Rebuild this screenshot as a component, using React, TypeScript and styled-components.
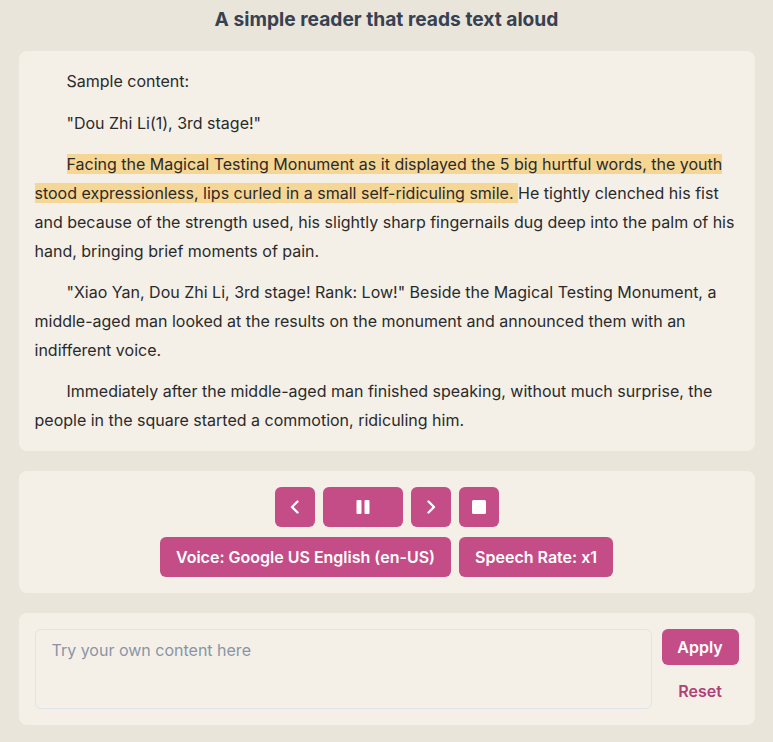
import React from "react";
import styled, { createGlobalStyle } from "styled-components";

const GlobalStyle = createGlobalStyle`
  html, body {
    margin: 0;
    padding: 0;
    background: #e9e5db;
  }
  body {
    font-family: Inter, "Noto Sans", sans-serif;
    color: #2a2a2a;
  }
  * { box-sizing: border-box; }
`;

const Page = styled.main`
  max-width: 736px;
  margin: 0 auto;
  padding: 5px 0 17px;
  display: flex;
  flex-direction: column;
  gap: 20px;
`;

const Title = styled.h1`
  margin: 0 0 -2px;
  font-size: 19.2px;
  line-height: 28px;
  font-weight: 700;
  color: #374151;
  text-align: center;
`;

const Card = styled.section`
  background: #f4f0e8;
  border-radius: 8px;
  padding: 16px;
`;

const Reader = styled(Card)`
  display: flex;
  flex-direction: column;
  gap: 12.8px;
`;

const Para = styled.p`
  margin: 0;
  font-size: 16px;
  line-height: 28.8px;
  text-indent: 32px;
  color: #2a2a2a;
`;

const Highlight = styled.span`
  background: #f6d695;
`;

const Controls = styled(Card)`
  display: flex;
  flex-direction: column;
  align-items: center;
  gap: 10px;
`;

const Row = styled.div`
  display: flex;
  gap: 8px;
  justify-content: center;
`;

const Button = styled.button<{ $w?: number }>`
  height: 40px;
  min-width: ${(p) => (p.$w ? `${p.$w}px` : "auto")};
  padding: 0 16px;
  border: none;
  border-radius: 6px;
  background: #c44d88;
  color: #fff;
  font-family: Inter, "Noto Sans", sans-serif;
  font-size: 16px;
  font-weight: 600;
  display: inline-flex;
  align-items: center;
  justify-content: center;
  cursor: pointer;
`;

const IconButton = styled(Button)`
  padding: 0;
  width: ${(p) => (p.$w ? `${p.$w}px` : "40px")};
`;

const Editor = styled(Card)`
  display: flex;
  gap: 10px;
  align-items: flex-start;
`;

const TextArea = styled.textarea`
  flex: 1;
  height: 80px;
  resize: none;
  background: transparent;
  border: 1px solid #dfe4ea;
  border-radius: 6px;
  padding: 8px 16px;
  font-family: Inter, "Noto Sans", sans-serif;
  font-size: 16px;
  line-height: 24px;
  color: #2a2a2a;
  outline: none;
  &::placeholder {
    color: #8a94a6;
  }
`;

const Side = styled.div`
  width: 77px;
  display: flex;
  flex-direction: column;
  gap: 8px;
`;

const ApplyButton = styled.button`
  height: 36px;
  border: none;
  border-radius: 6px;
  background: #c44d88;
  color: #fff;
  font-family: Inter, "Noto Sans", sans-serif;
  font-size: 16px;
  font-weight: 600;
  cursor: pointer;
`;

const ResetButton = styled(ApplyButton)`
  background: transparent;
  color: #b13f78;
  font-weight: 600;
`;

const Chevron = ({ dir }: { dir: "left" | "right" }) => (
  <svg width="12" height="14" viewBox="0 0 12 14" fill="none">
    <path
      d={dir === "left" ? "M8.5 1.5 L3 7 L8.5 12.5" : "M3.5 1.5 L9 7 L3.5 12.5"}
      stroke="#fff"
      strokeWidth="2.4"
      strokeLinecap="round"
      strokeLinejoin="round"
    />
  </svg>
);

const PauseIcon = () => (
  <svg width="14" height="14" viewBox="0 0 14 14">
    <rect x="0.5" y="0" width="5" height="14" rx="1" fill="#fff" />
    <rect x="8.5" y="0" width="5" height="14" rx="1" fill="#fff" />
  </svg>
);

const StopIcon = () => (
  <svg width="14" height="14" viewBox="0 0 14 14">
    <rect x="0" y="0" width="14" height="14" rx="1.5" fill="#fff" />
  </svg>
);

export default function App() {
  return (
    <>
      <GlobalStyle />
      <Page>
        <Title>A simple reader that reads text aloud</Title>
        <Reader>
          <Para>Sample content:</Para>
          <Para>"Dou Zhi Li(1), 3rd stage!"</Para>
          <Para>
            <Highlight>
              Facing the Magical Testing Monument as it displayed the 5 big hurtful words, the youth
              stood expressionless, lips curled in a small self-ridiculing smile.{" "}
            </Highlight>
            He tightly clenched his fist and because of the strength used, his slightly sharp
            fingernails dug deep into the palm of his hand, bringing brief moments of pain.
          </Para>
          <Para>
            "Xiao Yan, Dou Zhi Li, 3rd stage! Rank: Low!" Beside the Magical Testing Monument, a
            middle-aged man looked at the results on the monument and announced them with an
            indifferent voice.
          </Para>
          <Para>
            Immediately after the middle-aged man finished speaking, without much surprise, the
            people in the square started a commotion, ridiculing him.
          </Para>
        </Reader>
        <Controls>
          <Row>
            <IconButton aria-label="Previous">
              <Chevron dir="left" />
            </IconButton>
            <IconButton $w={80} aria-label="Pause">
              <PauseIcon />
            </IconButton>
            <IconButton aria-label="Next">
              <Chevron dir="right" />
            </IconButton>
            <IconButton aria-label="Stop">
              <StopIcon />
            </IconButton>
          </Row>
          <Row>
            <Button>Voice: Google US English (en-US)</Button>
            <Button>Speech Rate: x1</Button>
          </Row>
        </Controls>
        <Editor>
          <TextArea placeholder="Try your own content here" />
          <Side>
            <ApplyButton>Apply</ApplyButton>
            <ResetButton>Reset</ResetButton>
          </Side>
        </Editor>
      </Page>
    </>
  );
}
